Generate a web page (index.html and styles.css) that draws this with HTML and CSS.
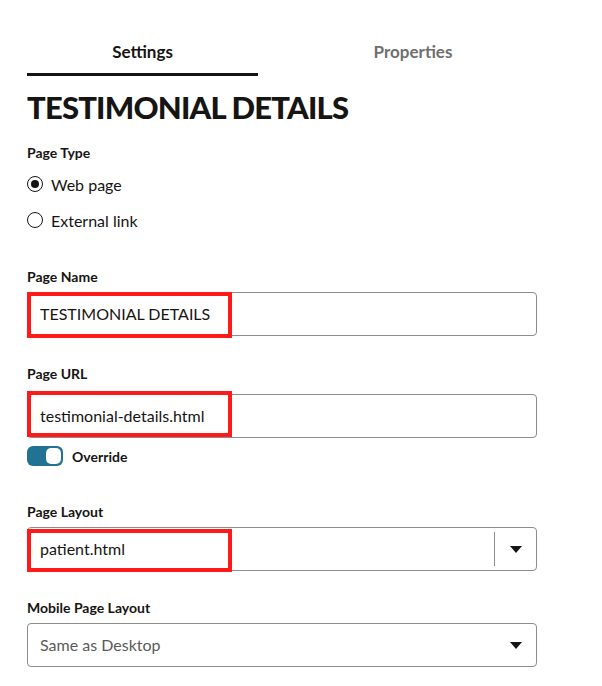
FILE: index.html
```html
<!DOCTYPE html>
<html>
<head>
<meta charset="utf-8">
<link rel="stylesheet" href="styles.css">
</head>
<body>
<div class="panel">
  <div class="tabs">
    <div class="tab active">Settings</div>
    <div class="tab">Properties</div>
  </div>
  <h1 class="title">TESTIMONIAL DETAILS</h1>

  <div class="label lbl-type">Page Type</div>
  <div class="radio-row first"><span class="radio checked"></span><span>Web page</span></div>
  <div class="radio-row"><span class="radio"></span><span>External link</span></div>

  <div class="label lbl-name">Page Name</div>
  <div class="field">
    <div class="input">TESTIMONIAL DETAILS</div>
    <div class="mark mark-name"></div>
  </div>

  <div class="label lbl-url">Page URL</div>
  <div class="field field-url">
    <div class="input">testimonial-details.html</div>
    <div class="mark mark-url"></div>
  </div>
  <div class="toggle-row">
    <span class="toggle"><span class="knob"></span></span>
    <span class="toggle-label">Override</span>
  </div>

  <div class="label lbl-layout">Page Layout</div>
  <div class="field">
    <div class="input select">
      <span class="value">patient.html</span>
      <span class="divider"></span>
      <span class="caret"></span>
    </div>
    <div class="mark mark-layout"></div>
  </div>

  <div class="label lbl-mobile">Mobile Page Layout</div>
  <div class="field">
    <div class="input select">
      <span class="value muted">Same as Desktop</span>
      <span class="caret plain"></span>
    </div>
  </div>
</div>
</body>
</html>
```

FILE: styles.css
```css
html, body {
  margin: 0;
  padding: 0;
  background: #ffffff;
}
body {
  font-family: "Lato", "Noto Sans", sans-serif;
  color: #161513;
}
.panel {
  padding: 0 0 0 27px;
  width: 510px;
}
.tabs {
  display: flex;
  padding-top: 41px;
}
.tab {
  flex: none;
  font-size: 17px;
  font-weight: 700;
  color: #6f6f6f;
  text-align: center;
  height: 35px;
  line-height: 22px;
  box-sizing: border-box;
}
.tab:first-child {
  width: 231px;
}
.tab:last-child {
  width: 310px;
}
.tab.active {
  color: #161513;
  border-bottom: 3px solid #161513;
}
.title {
  margin: 12px 0 0 0;
  font-size: 31px;
  font-weight: 900;
  line-height: 38px;
  letter-spacing: -0.8px;
  color: #161513;
}
.label {
  font-size: 14px;
  font-weight: 700;
  line-height: 16px;
}
.lbl-type { margin-top: 19px; }
.radio-row {
  display: flex;
  align-items: center;
  gap: 8px;
  height: 20px;
  font-size: 16px;
  margin-top: 16px;
}
.radio-row.first { margin-top: 13px; }
.radio {
  width: 16px;
  height: 16px;
  box-sizing: border-box;
  border: 1.5px solid #161513;
  border-radius: 50%;
  position: relative;
  flex: none;
}
.radio.checked::after {
  content: "";
  position: absolute;
  left: 2.5px;
  top: 2.5px;
  width: 8px;
  height: 8px;
  border-radius: 50%;
  background: #161513;
}
.lbl-name { margin-top: 39px; }
.lbl-url { margin-top: 30px; }
.lbl-layout { margin-top: 38px; }
.lbl-mobile { margin-top: 29px; }
.field {
  position: relative;
  margin-top: 7px;
}
.field-url {
  margin-top: 12px;
}
.input {
  height: 44px;
  box-sizing: border-box;
  border: 1px solid #8c8c8c;
  border-radius: 4px;
  padding: 0 12px;
  font-size: 16px;
  line-height: 42px;
  color: #161513;
}
.select {
  display: flex;
  align-items: center;
}
.select .value {
  flex: 1;
}
.muted {
  color: #5b5b5b;
}
.divider {
  width: 1px;
  height: 34px;
  background: #8c8c8c;
  margin-right: 15px;
}
.caret {
  width: 0;
  height: 0;
  border-left: 6px solid transparent;
  border-right: 6px solid transparent;
  border-top: 7px solid #161513;
  margin-right: 2px;
}
.mark {
  position: absolute;
  border: 4px solid #ff1a1a;
  box-sizing: border-box;
  pointer-events: none;
}
.mark-name {
  left: 0;
  top: 0;
  width: 205px;
  height: 46px;
}
.mark-url {
  left: 0;
  top: -3px;
  width: 205px;
  height: 46px;
}
.mark-layout {
  left: 0;
  top: 2px;
  width: 205px;
  height: 43px;
}
.toggle-row {
  display: flex;
  align-items: center;
  gap: 9px;
  margin-top: 8px;
  height: 20px;
}
.toggle {
  width: 36px;
  height: 20px;
  border-radius: 6px;
  background: #227393;
  display: flex;
  align-items: center;
  justify-content: flex-end;
  padding: 0 2px;
  box-sizing: border-box;
}
.knob {
  width: 15px;
  height: 16px;
  border-radius: 5px;
  background: #ffffff;
}
.toggle-label {
  font-size: 14px;
  font-weight: 700;
}
```
